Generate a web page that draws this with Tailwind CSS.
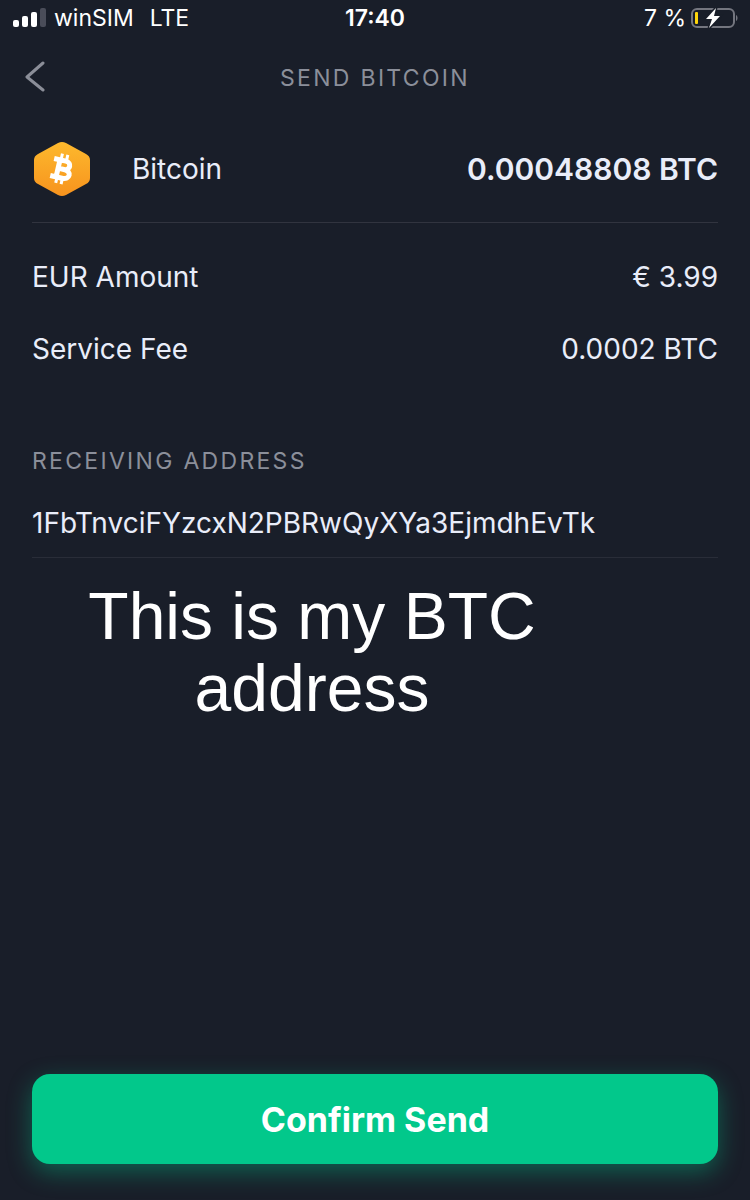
<!DOCTYPE html>
<html lang="en">
<head>
  <meta charset="UTF-8" />
  <meta name="viewport" content="width=device-width, initial-scale=1.0" />
  <title>Send Bitcoin</title>
  <script src="https://cdn.jsdelivr.net/npm/@tailwindcss/browser@4"></script>
</head>
<body class="bg-[#191e29] text-[#e9edf9] font-['Inter',sans-serif] min-h-screen flex flex-col">

  <!-- Status bar -->
  <div class="grid grid-cols-3 items-center h-9 px-3 text-white text-[23px] leading-9">
    <div class="flex items-center gap-2">
      <svg class="w-[34px] h-5" viewBox="0 0 34 20" aria-hidden="true">
        <rect x="1" y="12" width="6" height="7" rx="2" fill="#fff" />
        <rect x="10" y="8" width="6" height="11" rx="2" fill="#fff" />
        <rect x="19" y="4" width="6" height="15" rx="2" fill="#fff" />
        <rect x="28" y="0" width="6" height="19" rx="2" fill="#4a4d59" />
      </svg>
      <span>winSIM</span>
      <span class="ml-2">LTE</span>
    </div>
    <div class="text-center font-semibold">17:40</div>
    <div class="flex items-center justify-end gap-1">
      <span>7 %</span>
      <svg class="w-12 h-[22px]" viewBox="0 0 48 22" aria-hidden="true">
        <rect x="2" y="2" width="42" height="18" rx="5" fill="none" stroke="#74767f" stroke-width="2" />
        <path d="M46 8c2 1 2 5 0 6z" fill="#74767f" />
        <rect x="5" y="5" width="3" height="12" rx="1" fill="#ffd60a" />
        <path d="M26 1L16 12h6l-3 9L30 9h-6z" fill="#fff" stroke="#191e29" stroke-width="3" paint-order="stroke" />
      </svg>
    </div>
  </div>

  <!-- Header -->
  <header class="grid grid-cols-[48px_1fr_48px] items-center h-20 px-5">
    <button type="button" aria-label="Back" class="w-12 h-12 flex items-center">
      <svg class="w-8 h-8" viewBox="0 0 32 32" fill="none" stroke="#8b8e98" stroke-width="3" stroke-linecap="round" stroke-linejoin="round" aria-hidden="true">
        <path d="M23 3L7 17l16 13" />
      </svg>
    </button>
    <h1 class="pt-1 text-center text-[23px] tracking-widest text-[#8b8f9a]">SEND BITCOIN</h1>
  </header>

  <main class="grow flex flex-col px-8">
    <div class="flex items-center justify-between h-[107px] border-b border-[#31343f] text-[28px]">
      <div class="flex items-center">
        <svg class="w-[60px] h-[60px] mr-10" viewBox="0 0 60 60" aria-hidden="true">
          <defs>
            <linearGradient id="gold" x1="0" y1="0" x2="0" y2="1">
              <stop offset="0" stop-color="#fdb92d" />
              <stop offset="1" stop-color="#f7931e" />
            </linearGradient>
          </defs>
          <path d="M26 4q4-2 8 0l20 11q4 2 4 6v18q0 4-4 6L34 56q-4 2-8 0L6 45q-4-2-4-6V21q0-4 4-6z" fill="url(#gold)" />
          <g transform="rotate(13 30 30)" fill="none" stroke="#fff">
            <path d="M20 21.500h12c6.500 0 6.500 8.500 0 8.500H25m7 0c8.500 0 8.500 9 0 9H20M26 21.500V39" stroke-width="5" />
            <path d="M27 15v5m5.500-5v5M27 40v5m5.500-5v5" stroke-width="3" />
          </g>
        </svg>
        <span>Bitcoin</span>
      </div>
      <span class="font-semibold text-[30px]">0.00048808 BTC</span>
    </div>

    <dl class="pt-[18px] text-[28px] leading-[72px]">
      <div class="flex justify-between">
        <dt>EUR Amount</dt>
        <dd>€ 3.99</dd>
      </div>
      <div class="flex justify-between">
        <dt>Service Fee</dt>
        <dd>0.0002 BTC</dd>
      </div>
    </dl>

    <section class="mt-[60px]">
      <h2 class="text-[23px] leading-8 tracking-widest text-[#8b8f9a]">RECEIVING ADDRESS</h2>
      <p class="pt-7 pb-4 text-[28px] leading-9 border-b border-[#292d38] break-all">1FbTnvciFYzcxN2PBRwQyXYa3EjmdhEvTk</p>
    </section>

    <p class="mt-[22px] w-5/6 max-w-[560px] text-center text-[66px] leading-[72px] text-white font-['Liberation_Sans',sans-serif]">This is my BTC<br />address</p>

    <button type="button" class="mt-auto mb-9 h-[90px] w-full rounded-[18px] bg-[#02c88b] text-white text-[34px] font-bold shadow-[0_8px_24px_#02c88b66]">Confirm Send</button>
  </main>

</body>
</html>
